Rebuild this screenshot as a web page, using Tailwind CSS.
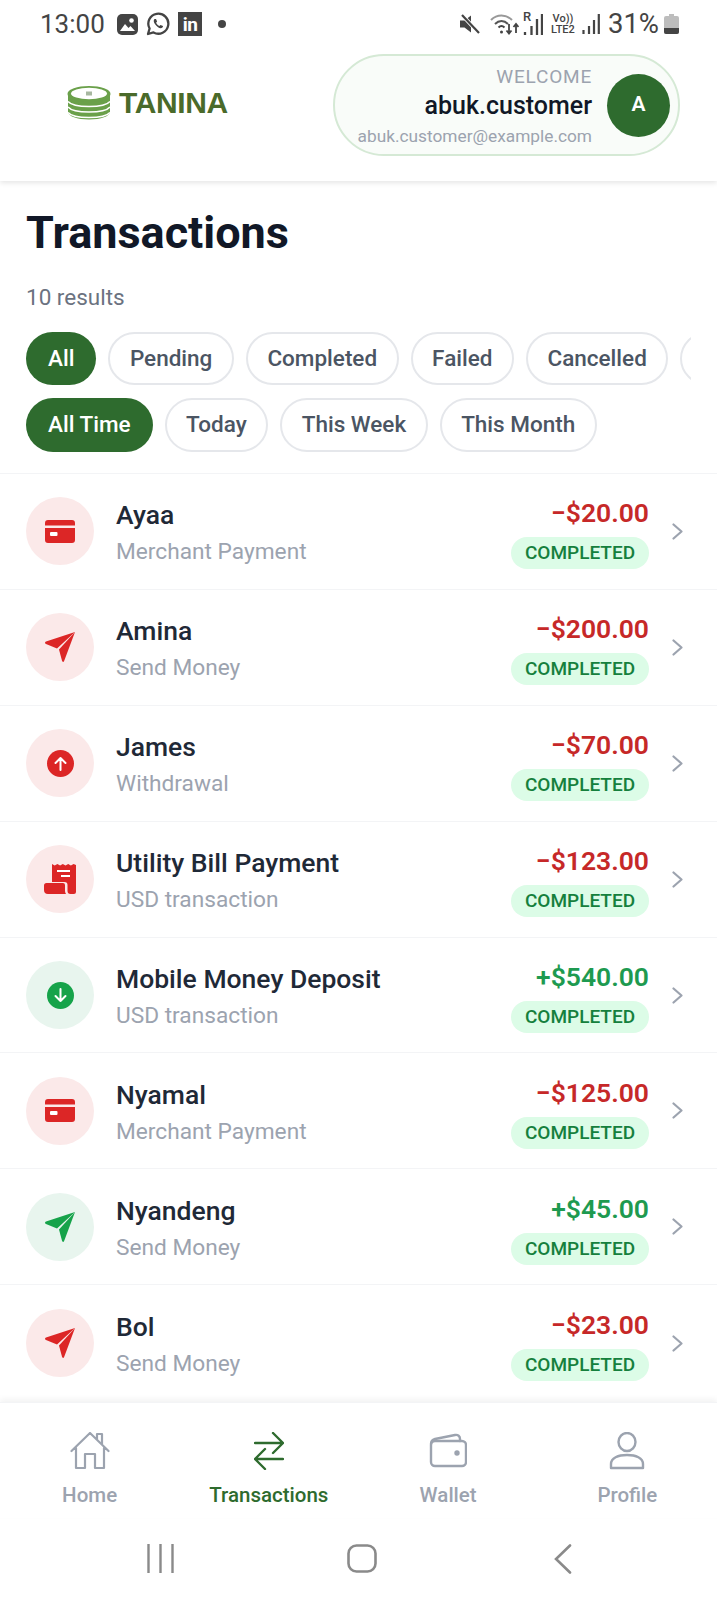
<!DOCTYPE html>
<html lang="en">
<head>
  <meta charset="UTF-8" />
  <meta name="viewport" content="width=device-width, initial-scale=1.0"/>
  <title>Transactions</title>
  <script src="https://cdn.jsdelivr.net/npm/@tailwindcss/browser@4"></script>
</head>
<body class="bg-white font-['Roboto',sans-serif]">
  <!-- shared icons -->
  <svg class="hidden">
    <symbol id="i-card" viewBox="0 0 30 23">
      <path fill="currentColor" d="M3 0h24a3 3 0 0 1 3 3v2.500H0V3a3 3 0 0 1 3-3zM0 8h30v12a3 3 0 0 1-3 3H3a3 3 0 0 1-3-3z"/>
      <rect x="5" y="12" width="7.500" height="4" rx="1" fill="#fff"/>
    </symbol>
    <symbol id="i-send" viewBox="0 0 30 30">
      <path fill="currentColor" d="M30 0 1 9.600c-1.300.5-1.300 1.800 0 2.300l11 4.600z"/>
      <path fill="currentColor" d="M30 0 14 17.500l3 11.300c.4 1.400 1.600 1.500 2.100.2z"/>
    </symbol>
    <symbol id="i-up" viewBox="0 0 27 27">
      <circle cx="13.500" cy="13.500" r="13.500" fill="currentColor"/>
      <path d="M13.500 20V8M8.500 13l5-5 5 5" fill="none" stroke="#fff" stroke-width="2" stroke-linecap="round" stroke-linejoin="round"/>
    </symbol>
    <symbol id="i-down" viewBox="0 0 27 27">
      <circle cx="13.500" cy="13.500" r="13.500" fill="currentColor"/>
      <path d="M13.500 7v12M8.500 14l5 5 5-5" fill="none" stroke="#fff" stroke-width="2" stroke-linecap="round" stroke-linejoin="round"/>
    </symbol>
    <symbol id="i-bill" viewBox="0 0 32 30">
      <path fill="currentColor" d="M8 0l2.700 1.500L13.400 0l2.700 1.500L18.800 0l2.700 1.500L24.200 0l2.700 1.500L29.600 0 32 1v27a2 2 0 0 1-2 2h-3.500a3 3 0 0 1-3-3v-6a3 3 0 0 0-3-3H8z"/>
      <path fill="currentColor" d="M2.500 19H19a2 2 0 0 1 2 2v6c0 1 .4 2 1 3H4a4 4 0 0 1-4-4v-4.500A2.500 2.500 0 0 1 2.500 19z"/>
      <path d="M13 7h13M17 12h9" stroke="#fff" stroke-width="2" fill="none"/>
    </symbol>
    <symbol id="i-chevron" viewBox="0 0 11 17">
      <path d="M1.500 1.500l8 7-8 7" fill="none" stroke="#9ca3af" stroke-width="2.200" stroke-linecap="round" stroke-linejoin="round"/>
    </symbol>
  </svg>

  <div class="h-[1600px] w-[717px] flex flex-col overflow-hidden">
    <!-- status bar -->
    <div class="h-[54px] shrink-0 flex items-center justify-between pl-[40px] pr-[38px] pb-[6px] text-[#444] relative z-10 bg-white">
      <div class="flex items-center">
        <span class="text-[26px] leading-none font-normal w-[66px]">13:00</span>
        <svg class="ml-[11px] w-[21px] h-[21px]" viewBox="0 0 21 21"><rect width="21" height="21" rx="5" fill="#444"/><circle cx="14.500" cy="6.500" r="2.300" fill="#fff"/><path d="M3 17l5-7 3.500 4 2-2 4.500 5z" fill="#fff"/></svg>
        <svg class="ml-[8px] w-[24px] h-[24px]" viewBox="0 0 24 24"><path d="M2 22l1.600-5.500A10 10 0 1 1 7.500 20.400z" fill="none" stroke="#444" stroke-width="2.300" stroke-linejoin="round"/><path d="M8.500 7c-1.200 1-1 3 .6 5.300s3.700 3.900 5.600 4c1.400 0 2.500-1 2.300-2.200l-2.500-1.200-1.100 1.200c-1.300-.5-2.700-1.900-3.300-3.300l1-1.200L10 7z" fill="#444"/></svg>
        <div class="ml-[8px] w-[24px] h-[24px] bg-[#444] flex items-end justify-center text-white font-bold text-[19px] leading-[22px] tracking-[-0.5px]">in</div>
        <div class="ml-[16px] w-[8px] h-[8px] rounded-full bg-[#444]"></div>
      </div>
      <div class="flex items-center">
        <svg class="w-[20px] h-[20px]" viewBox="0 0 20 20"><path d="M0 6.500h4.500L11 1.500v17l-6.500-5H0z" fill="#444"/><path d="M2 1l17 18" stroke="#fff" stroke-width="4"/><path d="M2 1l17 18" stroke="#444" stroke-width="2.200"/></svg>
        <svg class="ml-[10px] w-[29px] h-[22px]" viewBox="0 0 29 22"><path d="M1 7c6-6 15-6 21 0" fill="none" stroke="#999" stroke-width="2"/><path d="M5 11c4-4 9-4 13 0" fill="none" stroke="#555" stroke-width="2"/><path d="M8.500 14.500c2-2 4-2 6 0" fill="none" stroke="#444" stroke-width="2"/><circle cx="11.500" cy="19" r="1.500" fill="#444"/><path d="M19 11v9M16.500 17.500l2.500 3 2.500-3M26 20v-9M23.500 14l2.500-3 2.500 3" fill="none" stroke="#444" stroke-width="1.800"/></svg>
        <div class="ml-[4px] w-[20px] h-[24px] relative">
          <span class="absolute left-0 top-[-2px] text-[13px] font-medium leading-none">R</span>
          <svg class="absolute inset-0 w-[20px] h-[24px]" viewBox="0 0 20 24"><path d="M2 20v3M8.500 14v9M14 7v16M19 2v21" stroke="#444" stroke-width="2.300"/></svg>
        </div>
        <div class="ml-[7px] w-[26px] flex flex-col items-center text-[11px] leading-[11px] font-medium">
          <span>Vo))</span>
          <span>LTE2</span>
        </div>
        <svg class="ml-[6px] w-[18px] h-[20px]" viewBox="0 0 18 20"><path d="M1.500 16v4M7 12v8M12 6v14M16.800 0v20" stroke="#444" stroke-width="2.200"/></svg>
        <span class="ml-[8px] text-[27.500px] leading-none font-normal">31%</span>
        <svg class="ml-[5px] w-[15px] h-[20px]" viewBox="0 0 15 20"><path d="M5 0h5v2h3a2 2 0 0 1 2 2v14a2 2 0 0 1-2 2H2a2 2 0 0 1-2-2V4a2 2 0 0 1 2-2h3z" fill="#bdbdbd"/><path d="M0 14h15v4a2 2 0 0 1-2 2H2a2 2 0 0 1-2-2z" fill="#444"/></svg>
      </div>
    </div>

    <!-- header -->
    <header class="h-[127px] shrink-0 flex items-start justify-between pl-[67px] pr-[37px] shadow-[0_2px_5px_rgba(0,0,0,0.1)] relative">
      <div class="flex items-center gap-[8px] mt-[32px]">
        <svg class="w-[44px] h-[34px]" viewBox="0 0 44 34">
          <path d="M1 8v18c0 4 9 7.500 21 7.500S43 30 43 26V8z" fill="#6aa04a"/>
          <path d="M1 15.500c3 3.500 11 5 21 5s18-1.500 21-5M1 21c3 3.500 11 5 21 5s18-1.500 21-5M1 26.500c3 3.500 11 5 21 5s18-1.500 21-5" fill="none" stroke="#fff" stroke-width="1.500"/>
          <ellipse cx="22" cy="8" rx="21.500" ry="8" fill="#6aa04a"/>
          <ellipse cx="22" cy="7.500" rx="18" ry="5.800" fill="#fff"/>
          <rect x="19" y="5.500" width="6" height="4" fill="#a7b8a0"/>
        </svg>
        <span class="font-['Liberation_Sans',sans-serif] font-bold text-[30px] leading-none tracking-[-0.400px] text-[#4a6a2a]">TANINA</span>
      </div>
      <div class="w-[347px] h-[102px] rounded-full border-2 border-[#d5e9d5] bg-[#f9fcf9] flex items-center justify-end pr-[8px]">
        <div class="flex flex-col items-end mr-[15px] pt-[3px]">
          <span class="text-[19px] leading-[23px] tracking-[0.8px] text-[#9ca3af]">WELCOME</span>
          <span class="text-[25px] leading-[36px] font-medium text-[#111827]">abuk.customer</span>
          <span class="text-[17.300px] leading-[24px] text-[#9ca3af]">abuk.customer@example.com</span>
        </div>
        <div class="w-[63px] h-[63px] rounded-full bg-[#2e6b2e] text-white flex items-center justify-center font-semibold text-[21px]">A</div>
      </div>
    </header>

    <!-- title and filters -->
    <section class="shrink-0 border-b border-gray-100">
      <div class="pl-[26px] pt-[27px]">
        <h1 class="text-[45px] leading-[50px] font-bold text-[#111827]">Transactions</h1>
        <p class="mt-[24px] text-[22.500px] leading-[30px] text-[#6b7280]">10 results</p>
      </div>
      <div class="mt-[20px] ml-[26px] w-[665px] flex gap-[12px] overflow-hidden h-[53px]">
        <span class="shrink-0 h-[53px] flex items-center px-[22px] rounded-full bg-[#2e6b2e] text-white text-[22.500px] font-medium">All</span>
        <span class="shrink-0 h-[53px] flex items-center px-[19.500px] rounded-full border-2 border-gray-200 text-[#4b5563] text-[22.500px] font-medium">Pending</span>
        <span class="shrink-0 h-[53px] flex items-center px-[19.500px] rounded-full border-2 border-gray-200 text-[#4b5563] text-[22.500px] font-medium">Completed</span>
        <span class="shrink-0 h-[53px] flex items-center px-[19.500px] rounded-full border-2 border-gray-200 text-[#4b5563] text-[22.500px] font-medium">Failed</span>
        <span class="shrink-0 h-[53px] flex items-center px-[19.500px] rounded-full border-2 border-gray-200 text-[#4b5563] text-[22.500px] font-medium">Cancelled</span>
        <span class="shrink-0 h-[53px] w-[100px] rounded-full border-2 border-gray-200"></span>
      </div>
      <div class="mt-[13px] mb-[21px] ml-[26px] flex gap-[12px]">
        <span class="h-[54px] flex items-center px-[22px] rounded-full bg-[#2e6b2e] text-white text-[22.500px] font-medium">All Time</span>
        <span class="h-[54px] flex items-center px-[19.500px] rounded-full border-2 border-gray-200 text-[#4b5563] text-[22.500px] font-medium">Today</span>
        <span class="h-[54px] flex items-center px-[19.500px] rounded-full border-2 border-gray-200 text-[#4b5563] text-[22.500px] font-medium">This Week</span>
        <span class="h-[54px] flex items-center px-[19.500px] rounded-full border-2 border-gray-200 text-[#4b5563] text-[22.500px] font-medium">This Month</span>
      </div>
    </section>

    <!-- transaction list -->
    <main class="flex-1 overflow-hidden">
      <div class="h-[115.9px] border-b border-gray-100 flex items-center pl-[26px] pr-[34px]">
        <div class="w-[68px] h-[68px] rounded-full bg-[#fbe9e9] text-[#dc2626] flex items-center justify-center"><svg class="w-[30px] h-[23px]"><use href="#i-card"/></svg></div>
        <div class="ml-[22px] flex-1 pt-[7px]"><div class="text-[26.500px] leading-[34px] font-medium text-[#1f2937]">Ayaa</div><div class="text-[22.700px] leading-[39px] text-[#9ca3af]">Merchant Payment</div></div>
        <div class="flex flex-col items-end pt-[3px]"><div class="text-[26.500px] leading-[34px] font-semibold text-[#c62828]">−$20.00</div><div class="mt-[7px] h-[32px] w-[138px] rounded-full bg-[#dcfce7] text-[#15803d] text-[19px] font-medium flex items-center justify-center">COMPLETED</div></div>
        <svg class="ml-[23px] w-[11px] h-[17px]"><use href="#i-chevron"/></svg>
      </div>
      <div class="h-[115.9px] border-b border-gray-100 flex items-center pl-[26px] pr-[34px]">
        <div class="w-[68px] h-[68px] rounded-full bg-[#fbe9e9] text-[#dc2626] flex items-center justify-center"><svg class="w-[30px] h-[30px]"><use href="#i-send"/></svg></div>
        <div class="ml-[22px] flex-1 pt-[7px]"><div class="text-[26.500px] leading-[34px] font-medium text-[#1f2937]">Amina</div><div class="text-[22.700px] leading-[39px] text-[#9ca3af]">Send Money</div></div>
        <div class="flex flex-col items-end pt-[3px]"><div class="text-[26.500px] leading-[34px] font-semibold text-[#c62828]">−$200.00</div><div class="mt-[7px] h-[32px] w-[138px] rounded-full bg-[#dcfce7] text-[#15803d] text-[19px] font-medium flex items-center justify-center">COMPLETED</div></div>
        <svg class="ml-[23px] w-[11px] h-[17px]"><use href="#i-chevron"/></svg>
      </div>
      <div class="h-[115.9px] border-b border-gray-100 flex items-center pl-[26px] pr-[34px]">
        <div class="w-[68px] h-[68px] rounded-full bg-[#fbe9e9] text-[#dc2626] flex items-center justify-center"><svg class="w-[27px] h-[27px]"><use href="#i-up"/></svg></div>
        <div class="ml-[22px] flex-1 pt-[7px]"><div class="text-[26.500px] leading-[34px] font-medium text-[#1f2937]">James</div><div class="text-[22.700px] leading-[39px] text-[#9ca3af]">Withdrawal</div></div>
        <div class="flex flex-col items-end pt-[3px]"><div class="text-[26.500px] leading-[34px] font-semibold text-[#c62828]">−$70.00</div><div class="mt-[7px] h-[32px] w-[138px] rounded-full bg-[#dcfce7] text-[#15803d] text-[19px] font-medium flex items-center justify-center">COMPLETED</div></div>
        <svg class="ml-[23px] w-[11px] h-[17px]"><use href="#i-chevron"/></svg>
      </div>
      <div class="h-[115.9px] border-b border-gray-100 flex items-center pl-[26px] pr-[34px]">
        <div class="w-[68px] h-[68px] rounded-full bg-[#fbe9e9] text-[#dc2626] flex items-center justify-center"><svg class="w-[32px] h-[30px]"><use href="#i-bill"/></svg></div>
        <div class="ml-[22px] flex-1 pt-[7px]"><div class="text-[26.500px] leading-[34px] font-medium text-[#1f2937]">Utility Bill Payment</div><div class="text-[22.700px] leading-[39px] text-[#9ca3af]">USD transaction</div></div>
        <div class="flex flex-col items-end pt-[3px]"><div class="text-[26.500px] leading-[34px] font-semibold text-[#c62828]">−$123.00</div><div class="mt-[7px] h-[32px] w-[138px] rounded-full bg-[#dcfce7] text-[#15803d] text-[19px] font-medium flex items-center justify-center">COMPLETED</div></div>
        <svg class="ml-[23px] w-[11px] h-[17px]"><use href="#i-chevron"/></svg>
      </div>
      <div class="h-[115.9px] border-b border-gray-100 flex items-center pl-[26px] pr-[34px]">
        <div class="w-[68px] h-[68px] rounded-full bg-[#e8f5ee] text-[#16a34a] flex items-center justify-center"><svg class="w-[27px] h-[27px]"><use href="#i-down"/></svg></div>
        <div class="ml-[22px] flex-1 pt-[7px]"><div class="text-[26.500px] leading-[34px] font-medium text-[#1f2937]">Mobile Money Deposit</div><div class="text-[22.700px] leading-[39px] text-[#9ca3af]">USD transaction</div></div>
        <div class="flex flex-col items-end pt-[3px]"><div class="text-[26.500px] leading-[34px] font-semibold text-[#1e9a50]">+$540.00</div><div class="mt-[7px] h-[32px] w-[138px] rounded-full bg-[#dcfce7] text-[#15803d] text-[19px] font-medium flex items-center justify-center">COMPLETED</div></div>
        <svg class="ml-[23px] w-[11px] h-[17px]"><use href="#i-chevron"/></svg>
      </div>
      <div class="h-[115.9px] border-b border-gray-100 flex items-center pl-[26px] pr-[34px]">
        <div class="w-[68px] h-[68px] rounded-full bg-[#fbe9e9] text-[#dc2626] flex items-center justify-center"><svg class="w-[30px] h-[23px]"><use href="#i-card"/></svg></div>
        <div class="ml-[22px] flex-1 pt-[7px]"><div class="text-[26.500px] leading-[34px] font-medium text-[#1f2937]">Nyamal</div><div class="text-[22.700px] leading-[39px] text-[#9ca3af]">Merchant Payment</div></div>
        <div class="flex flex-col items-end pt-[3px]"><div class="text-[26.500px] leading-[34px] font-semibold text-[#c62828]">−$125.00</div><div class="mt-[7px] h-[32px] w-[138px] rounded-full bg-[#dcfce7] text-[#15803d] text-[19px] font-medium flex items-center justify-center">COMPLETED</div></div>
        <svg class="ml-[23px] w-[11px] h-[17px]"><use href="#i-chevron"/></svg>
      </div>
      <div class="h-[115.9px] border-b border-gray-100 flex items-center pl-[26px] pr-[34px]">
        <div class="w-[68px] h-[68px] rounded-full bg-[#e8f5ee] text-[#16a34a] flex items-center justify-center"><svg class="w-[30px] h-[30px]"><use href="#i-send"/></svg></div>
        <div class="ml-[22px] flex-1 pt-[7px]"><div class="text-[26.500px] leading-[34px] font-medium text-[#1f2937]">Nyandeng</div><div class="text-[22.700px] leading-[39px] text-[#9ca3af]">Send Money</div></div>
        <div class="flex flex-col items-end pt-[3px]"><div class="text-[26.500px] leading-[34px] font-semibold text-[#1e9a50]">+$45.00</div><div class="mt-[7px] h-[32px] w-[138px] rounded-full bg-[#dcfce7] text-[#15803d] text-[19px] font-medium flex items-center justify-center">COMPLETED</div></div>
        <svg class="ml-[23px] w-[11px] h-[17px]"><use href="#i-chevron"/></svg>
      </div>
      <div class="h-[115.9px] flex items-center pl-[26px] pr-[34px]">
        <div class="w-[68px] h-[68px] rounded-full bg-[#fbe9e9] text-[#dc2626] flex items-center justify-center"><svg class="w-[30px] h-[30px]"><use href="#i-send"/></svg></div>
        <div class="ml-[22px] flex-1 pt-[7px]"><div class="text-[26.500px] leading-[34px] font-medium text-[#1f2937]">Bol</div><div class="text-[22.700px] leading-[39px] text-[#9ca3af]">Send Money</div></div>
        <div class="flex flex-col items-end pt-[3px]"><div class="text-[26.500px] leading-[34px] font-semibold text-[#c62828]">−$23.00</div><div class="mt-[7px] h-[32px] w-[138px] rounded-full bg-[#dcfce7] text-[#15803d] text-[19px] font-medium flex items-center justify-center">COMPLETED</div></div>
        <svg class="ml-[23px] w-[11px] h-[17px]"><use href="#i-chevron"/></svg>
      </div>
    </main>

    <!-- bottom nav -->
    <nav class="h-[116px] shrink-0 grid grid-cols-4 pt-[29px] border-t border-gray-100 shadow-[0_-3px_6px_rgba(0,0,0,0.05)] relative bg-white">
      <a class="flex flex-col items-center text-[#9ca3af]">
        <svg class="w-[40px] h-[38px]" viewBox="0 0 40 38" fill="none" stroke="#9ca3af" stroke-width="2.200" stroke-linecap="round" stroke-linejoin="round"><path d="M1.500 19 20 1l18.500 18M6 16v20h9V22h10v14h9V16M27 7.500V2h5v10.500"/></svg>
        <span class="mt-[11px] text-[20.500px] leading-[28px] font-medium">Home</span>
      </a>
      <a class="flex flex-col items-center text-[#2e6b2e]">
        <svg class="w-[30px] h-[38px]" viewBox="0 0 30 38" fill="none" stroke="#2e6b2e" stroke-width="2.400" stroke-linecap="round" stroke-linejoin="round"><path d="M1 11h28M19 1l10 10-10 10M29 27H1M11 17 1 27l10 10"/></svg>
        <span class="mt-[11px] text-[20.500px] leading-[28px] font-medium">Transactions</span>
      </a>
      <a class="flex flex-col items-center text-[#9ca3af]">
        <svg class="w-[38px] h-[38px]" viewBox="0 0 38 38" fill="none" stroke="#9ca3af" stroke-width="2.400" stroke-linecap="round" stroke-linejoin="round"><path d="M2 12c0-3 1-4 4-5l20-4c3-.5 5 1 5 4v2"/><rect x="2" y="9" width="35" height="25" rx="4"/><circle cx="28" cy="21" r="1.500" fill="#9ca3af"/></svg>
        <span class="mt-[11px] text-[20.500px] leading-[28px] font-medium">Wallet</span>
      </a>
      <a class="flex flex-col items-center text-[#9ca3af]">
        <svg class="w-[36px] h-[38px]" viewBox="0 0 36 38" fill="none" stroke="#9ca3af" stroke-width="2.400" stroke-linecap="round" stroke-linejoin="round"><ellipse cx="18" cy="10" rx="8.500" ry="9"/><path d="M2 36v-4c0-6 7-9 16-9s16 3 16 9v4z"/></svg>
        <span class="mt-[11px] text-[20.500px] leading-[28px] font-medium">Profile</span>
      </a>
    </nav>

    <!-- android buttons -->
    <div class="h-[82px] shrink-0 grid grid-cols-3 items-start bg-white pt-[26px]">
      <div class="flex justify-end pr-[65px]"><svg class="w-[27px] h-[29px]" viewBox="0 0 27 29"><path d="M1.500 0v29M13.500 0v29M25.500 0v29" stroke="#8a8a8a" stroke-width="2.400"/></svg></div>
      <div class="flex justify-center pl-[6px]"><svg class="w-[30px] h-[29px]" viewBox="0 0 30 29"><rect x="1.500" y="1.500" width="27" height="26" rx="8" fill="none" stroke="#8a8a8a" stroke-width="2.600"/></svg></div>
      <div class="flex justify-start pl-[76px]"><svg class="w-[18px] h-[30px]" viewBox="0 0 18 30"><path d="M16 1.500 2 15l14 13.500" fill="none" stroke="#8a8a8a" stroke-width="2.600" stroke-linecap="round"/></svg></div>
    </div>
  </div>
</body>
</html>
